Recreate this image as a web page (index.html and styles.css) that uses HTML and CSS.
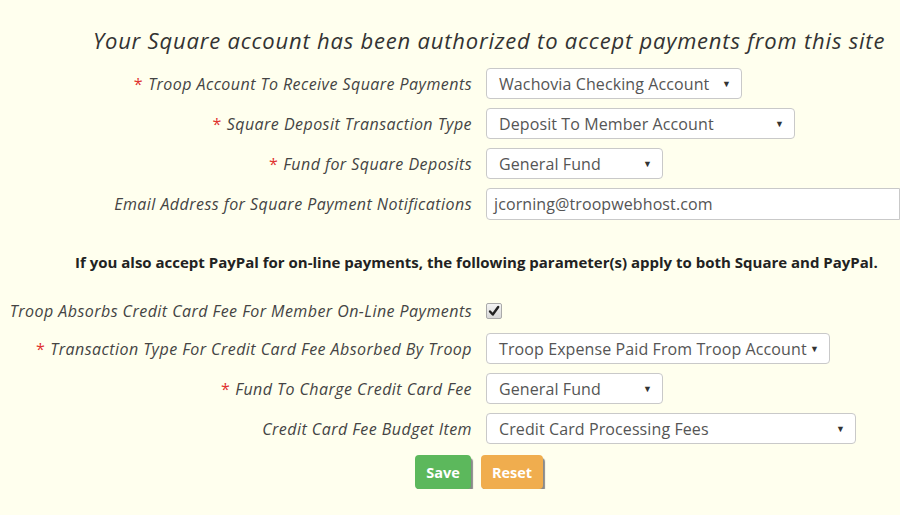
FILE: index.html
```html
<!DOCTYPE html>
<html>
<head>
<meta charset="utf-8">
<link rel="stylesheet" href="styles.css">
</head>
<body>
<div class="page">
  <h1 class="title">Your Square account has been authorized to accept payments from this site</h1>
  <form class="form">
    <label class="lbl"><span class="req">*</span> Troop Account To Receive Square Payments</label>
    <div class="ctl"><div class="sel w1">Wachovia Checking Account<span class="arr">▼</span></div></div>

    <label class="lbl"><span class="req">*</span> Square Deposit Transaction Type</label>
    <div class="ctl"><div class="sel w2">Deposit To Member Account<span class="arr">▼</span></div></div>

    <label class="lbl"><span class="req">*</span> Fund for Square Deposits</label>
    <div class="ctl"><div class="sel w3">General Fund<span class="arr">▼</span></div></div>

    <label class="lbl">Email Address for Square Payment Notifications</label>
    <div class="ctl"><div class="inp">jcorning@troopwebhost.com</div></div>

    <p class="note">If you also accept PayPal for on-line payments, the following parameter(s) apply to both Square and PayPal.</p>

    <label class="lbl chkrow">Troop Absorbs Credit Card Fee For Member On-Line Payments</label>
    <div class="ctl chkrow"><span class="chk"><svg width="12" height="12" viewBox="0 0 12 12"><path d="M2 6.5 L4.8 9.5 L10.2 2" fill="none" stroke="#222" stroke-width="2.4" stroke-linecap="round" stroke-linejoin="round"/></svg></span></div>

    <label class="lbl"><span class="req">*</span> Transaction Type For Credit Card Fee Absorbed By Troop</label>
    <div class="ctl"><div class="sel w4">Troop Expense Paid From Troop Account<span class="arr">▼</span></div></div>

    <label class="lbl"><span class="req">*</span> Fund To Charge Credit Card Fee</label>
    <div class="ctl"><div class="sel w3">General Fund<span class="arr">▼</span></div></div>

    <label class="lbl">Credit Card Fee Budget Item</label>
    <div class="ctl"><div class="sel w5">Credit Card Processing Fees<span class="arr">▼</span></div></div>
  </form>
  <div class="buttons">
    <button class="btn save" type="button">Save</button>
    <button class="btn reset" type="button">Reset</button>
  </div>
</div>
</body>
</html>
```
FILE: styles.css
```css
html, body {
  margin: 0;
  padding: 0;
  background: #ffffee;
  overflow: hidden;
}
body {
  font-family: "Open Sans", "Lato", sans-serif;
  color: #444;
}
.page {
  width: 900px;
  padding-top: 25px;
}
.title {
  margin: 0 0 13px 93px;
  font-size: 22px;
  line-height: 30px;
  font-weight: normal;
  font-style: italic;
  color: #333;
  white-space: nowrap;
  letter-spacing: 0.8px;
}
.form {
  display: grid;
  grid-template-columns: 472px 1fr;
  column-gap: 14px;
  row-gap: 9px;
  margin: 0;
}
.lbl {
  display: flex;
  align-items: center;
  justify-content: flex-end;
  font-style: italic;
  font-size: 16px;
  letter-spacing: 0.45px;
  color: #444;
  white-space: nowrap;
  gap: 5px;
}
.req {
  color: #e0322f;
  font-style: normal;
}
.ctl {
  display: flex;
  align-items: center;
  min-width: 0;
}
.sel, .inp {
  box-sizing: border-box;
  height: 31px;
  border: 1px solid #c9c9c9;
  border-radius: 4px;
  background: #fff;
  font-size: 16px;
  letter-spacing: 0.1px;
  color: #555;
  display: flex;
  align-items: center;
  padding: 0 10px 0 12px;
  white-space: nowrap;
}
.sel {
  justify-content: space-between;
}
.arr {
  font-size: 9px;
  color: #333;
  letter-spacing: 0;
}
.inp {
  height: 32px;
  width: 440px;
  padding-left: 7px;
  border-radius: 4px 0 0 4px;
}
.w1 { width: 256px; }
.w2 { width: 309px; }
.w3 { width: 177px; }
.w4 { width: 344px; }
.w5 { width: 370px; }
.note {
  grid-column: 1 / 3;
  margin: 23px 0 17px 75px;
  font-size: 15px;
  line-height: 20px;
  font-weight: bold;
  color: #222;
  white-space: nowrap;
}
.chkrow {
  height: 26px;
}
.chk {
  box-sizing: border-box;
  width: 16px;
  height: 16px;
  border: 1px solid #aaa;
  border-radius: 2px;
  background: linear-gradient(#f4f4f4, #d8d8d8);
  display: flex;
  align-items: center;
  justify-content: center;
}
.buttons {
  display: flex;
  gap: 10px;
  margin: 11px 0 0 415px;
}
.btn {
  height: 34px;
  border: none;
  border-radius: 4px;
  color: #fff;
  font-family: "Open Sans", sans-serif;
  font-weight: bold;
  font-size: 14.5px;
  padding: 0;
  box-shadow: 2px 3px 1px #8a8a8a;
}
.save {
  width: 56px;
  background: #5cb85c;
}
.reset {
  width: 62px;
  background: #f0ad4e;
}
```
